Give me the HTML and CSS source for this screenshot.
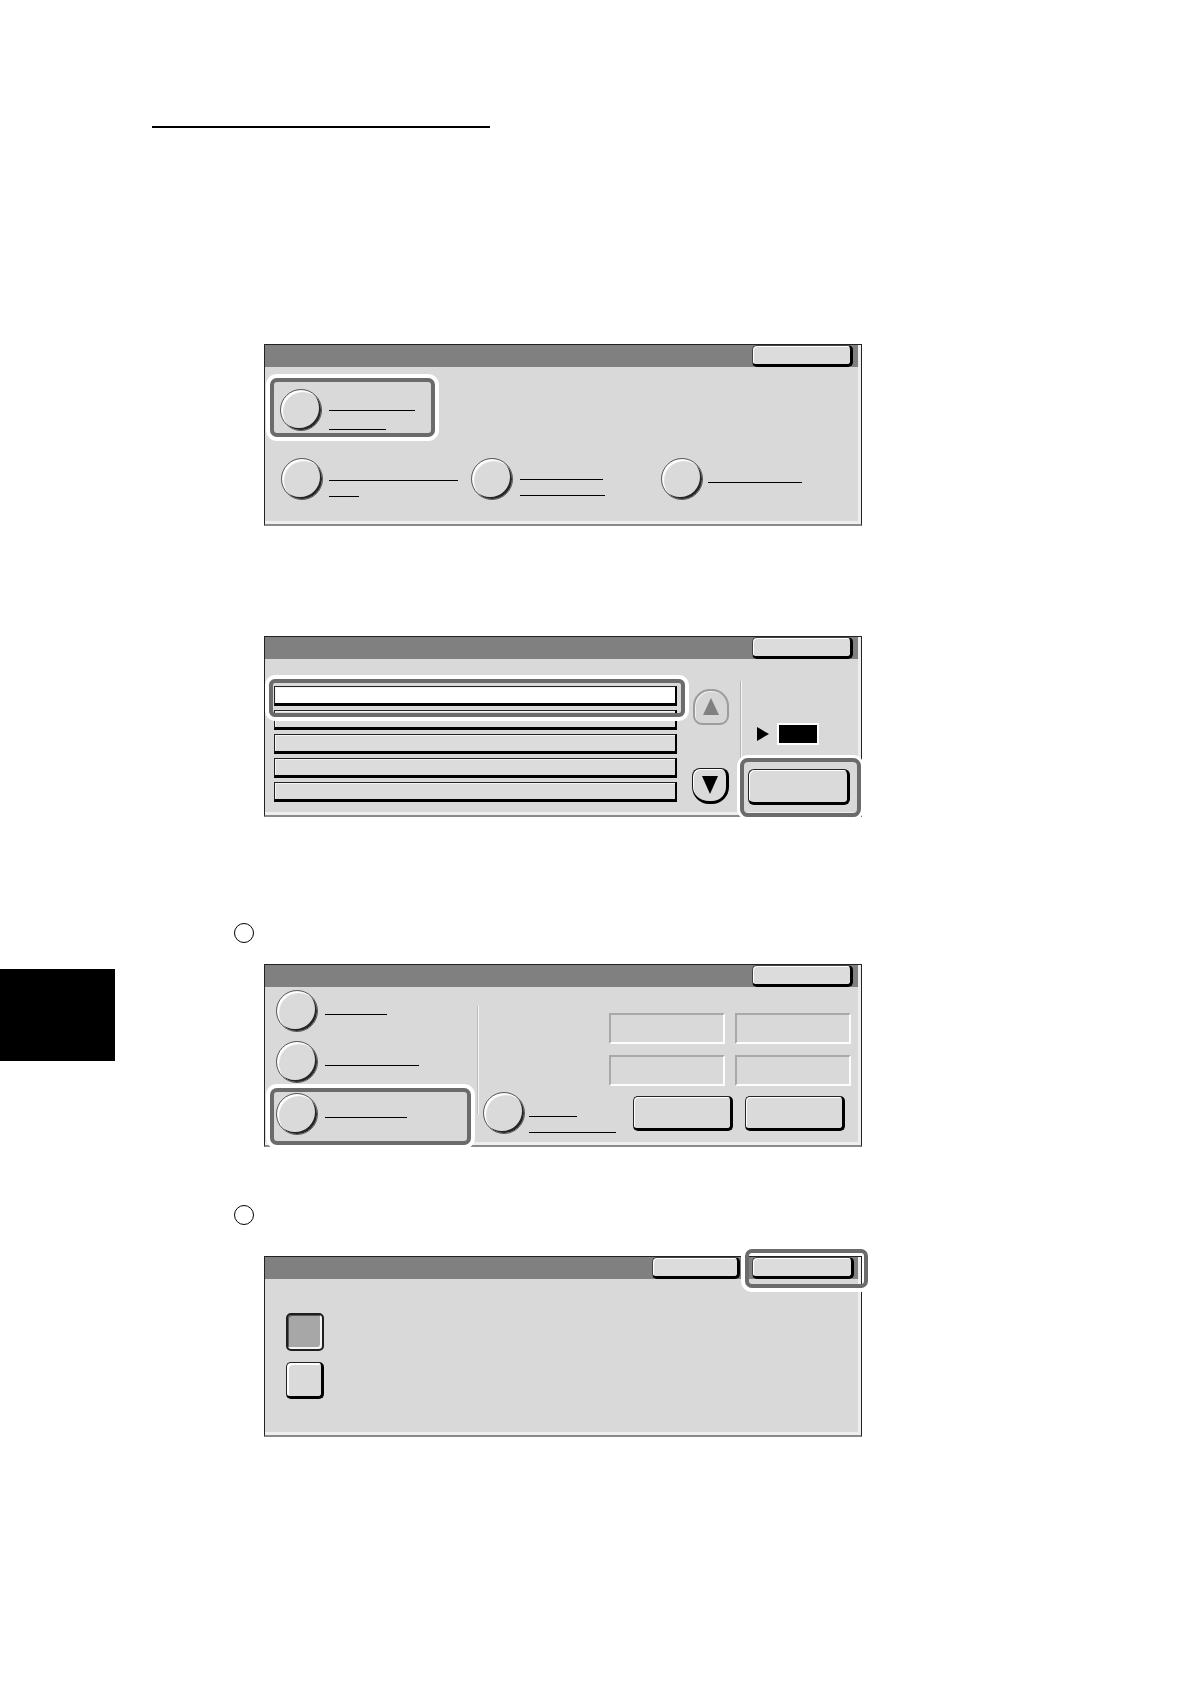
FILE: index.html
```html
<!DOCTYPE html>
<html>
<head>
<meta charset="utf-8">
<title>Screens</title>
<link rel="stylesheet" href="styles.css">
</head>
<body>
<div class="page">
  <div class="rule"></div>

  <div class="panel panel-a">
    <div class="bar"><div class="tbtn"></div></div>
    <div class="a-body">
      <div class="sel sel-a">
        <div class="circ"></div>
        <div class="lines"><div class="ln w86"></div><div class="ln w57"></div></div>
      </div>
      <div class="a-row">
        <div class="a-item a-i1">
          <div class="circ"></div>
          <div class="lines"><div class="ln w129"></div><div class="ln w30"></div></div>
        </div>
        <div class="a-item a-i2">
          <div class="circ"></div>
          <div class="lines"><div class="ln w83"></div><div class="ln w85"></div></div>
        </div>
        <div class="a-item a-i3">
          <div class="circ"></div>
          <div class="lines"><div class="ln w94"></div></div>
        </div>
      </div>
    </div>
  </div>

  <div class="panel panel-b">
    <div class="bar"><div class="tbtn"></div></div>
    <div class="b-body">
      <div class="list">
        <div class="row row-on"></div>
        <div class="row"></div>
        <div class="row"></div>
        <div class="row"></div>
        <div class="row"></div>
      </div>
      <div class="scroll">
        <div class="up"><div class="up-tri"></div></div>
        <div class="down"><div class="down-tri"></div></div>
      </div>
      <div class="b-right">
        <div class="b-info">
          <div class="b-ind"><div class="arrow"></div><div class="blk"></div></div>
        </div>
        <div class="sel sel-b"><div class="btn-l"></div></div>
      </div>
    </div>
  </div>

  <div class="marker m1"></div>

  <div class="sec-c">
    <div class="tab"></div>
    <div class="panel panel-c">
      <div class="bar"><div class="tbtn"></div></div>
      <div class="c-body">
        <div class="c-left">
          <div class="c-item c-i1">
            <div class="circ"></div>
            <div class="lines"><div class="ln w62"></div></div>
          </div>
          <div class="c-item c-i2">
            <div class="circ"></div>
            <div class="lines"><div class="ln w94"></div></div>
          </div>
          <div class="sel sel-c c-item">
            <div class="circ"></div>
            <div class="lines"><div class="ln w82"></div></div>
          </div>
        </div>
        <div class="c-sep"></div>
        <div class="c-right">
          <div class="grid">
            <div class="ebox"></div><div class="ebox"></div>
            <div class="ebox"></div><div class="ebox"></div>
          </div>
          <div class="c-bot">
            <div class="circ"></div>
            <div class="lines"><div class="ln w48"></div><div class="ln w87"></div></div>
            <div class="c-btns"><div class="btn-c"></div><div class="btn-c"></div></div>
          </div>
        </div>
      </div>
    </div>
  </div>

  <div class="marker m2"></div>

  <div class="panel panel-d">
    <div class="bar bar-d"><div class="tbtn tbtn-a"></div><div class="tbtn tbtn-b"></div></div>
    <div class="d-body">
      <div class="sq sq-on"></div>
      <div class="sq sq-off"></div>
    </div>
  </div>
</div>
</body>
</html>
```

FILE: styles.css
```css
* { box-sizing: border-box; }

body {
  margin: 0;
  background: #fff;
  font-family: "Liberation Sans", Arial, sans-serif;
}

.page {
  width: 1190px;
  padding-top: 126px;
  padding-bottom: 40px;
}

.rule {
  margin-left: 152px;
  width: 338px;
  height: 2px;
  background: #000;
}

/* ---------- panel frame ---------- */
.panel {
  position: relative;
  width: 598px;
  margin-left: 264px;
  background: #d9d9d9;
  border: 1px solid #222;
  border-bottom: 2px solid #8a8a8a;
  box-shadow: inset -3px -3px 0 #eeeeee;
}

.bar {
  height: 22px;
  margin-right: 3px;
  background: #808080;
  display: flex;
  justify-content: flex-end;
  padding-right: 5px;
}

.tbtn {
  width: 101px;
  height: 22px;
  background: #dcdcdc;
  border: 1px solid #444;
  border-right: 3px solid #000;
  border-bottom: 3px solid #000;
  border-radius: 5px;
  box-shadow: inset 1px 1px 0 #fff;
}

.circ {
  flex: none;
  width: 42px;
  height: 42px;
  border-radius: 50%;
  background: #dadada;
  border: 1px solid #5a5a5a;
  box-shadow: inset 2px 2px 1px #fff, inset -2px -2px 0 #262626;
}

.lines {
  display: flex;
  flex-direction: column;
}

.ln { height: 1px; background: #000; }
.w30 { width: 30px; }
.w48 { width: 48px; }
.w57 { width: 57px; }
.w62 { width: 62px; }
.w82 { width: 82px; }
.w83 { width: 83px; }
.w85 { width: 85px; }
.w86 { width: 86px; }
.w87 { width: 87px; }
.w94 { width: 94px; }
.w129 { width: 129px; }

.sel {
  border: 4px solid #6b6b6b;
  border-radius: 7px;
  box-shadow: 0 0 0 4px #fff;
}

/* ---------- panel A ---------- */
.panel-a { margin-top: 216px; height: 182px; }

.a-body { padding: 11px 0 0 5px; }

.sel-a {
  width: 165px;
  height: 59px;
  display: flex;
  align-items: flex-start;
  padding: 7px 0 0 6px;
}
.sel-a .lines { margin-left: 7px; padding-top: 21px; gap: 18px; }

.a-row { display: flex; margin: 21px 0 0 11px; }
.a-item { display: flex; align-items: flex-start; width: 190px; }
.a-i1 .lines { margin-left: 6px; padding-top: 22px; gap: 15px; }
.a-i2 .lines { margin-left: 7px; padding-top: 21px; gap: 15px; }
.a-i3 .lines { margin-left: 5px; padding-top: 24px; }

/* ---------- panel B ---------- */
.panel-b { margin-top: 110px; height: 181px; }

.b-body { display: flex; align-items: flex-start; }

.list {
  width: 403px;
  margin: 27px 0 0 9px;
  display: flex;
  flex-direction: column;
  gap: 4px;
}

.row {
  height: 20px;
  background: #dcdcdc;
  border: 1px solid #222;
  border-right: 2px solid #000;
  border-bottom: 3px solid #000;
  box-shadow: inset 1px 1px 0 #f4f4f4;
}

.row-on { position: relative; background: #fff; }
.row-on::after {
  content: "";
  position: absolute;
  left: -6px;
  top: -8px;
  right: -10px;
  bottom: -14px;
  border: 4px solid #6b6b6b;
  border-radius: 6px;
  box-shadow: 0 0 0 4px #fff;
}

.scroll {
  width: 37px;
  height: 115px;
  margin: 30px 0 0 15px;
  display: flex;
  flex-direction: column;
  justify-content: space-between;
  align-items: center;
}

.up {
  width: 36px;
  height: 36px;
  border: 2px solid #9c9c9c;
  border-radius: 17px 17px 9px 9px;
  background: #d6d6d6;
  box-shadow: inset 1px 1px 0 #f0f0f0;
  display: flex;
  align-items: center;
  justify-content: center;
}
.up-tri {
  width: 0;
  height: 0;
  border-left: 8px solid transparent;
  border-right: 8px solid transparent;
  border-bottom: 17px solid #808080;
  margin-top: -2px;
}

.down {
  width: 37px;
  height: 36px;
  border: 1px solid #1a1a1a;
  border-right: 3px solid #000;
  border-bottom: 3px solid #000;
  border-radius: 8px 8px 17px 17px;
  background: #dadada;
  box-shadow: inset 1px 1px 0 #fff;
  display: flex;
  align-items: center;
  justify-content: center;
}
.down-tri {
  width: 0;
  height: 0;
  border-left: 8px solid transparent;
  border-right: 8px solid transparent;
  border-top: 18px solid #000;
}

.b-right {
  width: 121px;
  margin-left: 11px;
  display: flex;
  flex-direction: column;
}

.b-info {
  margin-top: 22px;
  height: 77px;
  border-left: 1px solid #b4b4b4;
  box-shadow: inset 1px 0 0 #f4f4f4;
  padding: 42px 0 0 16px;
}
.b-ind { display: flex; align-items: center; }
.arrow {
  width: 0;
  height: 0;
  border-left: 12px solid #000;
  border-top: 7px solid transparent;
  border-bottom: 7px solid transparent;
}
.blk {
  width: 42px;
  height: 22px;
  margin-left: 8px;
  background: #000;
  border: 2px solid #fff;
}

.sel-b {
  width: 121px;
  height: 59px;
  border-radius: 8px;
  padding: 7px 0 0 4px;
  box-shadow: 0 0 0 3px #fff;
}

.btn-l {
  width: 102px;
  height: 36px;
  background: #dadada;
  border: 1px solid #222;
  border-right: 3px solid #000;
  border-bottom: 3px solid #000;
  border-radius: 6px;
  box-shadow: inset 1px 1px 0 #fff;
}

/* ---------- markers ---------- */
.marker {
  width: 20px;
  height: 20px;
  margin-left: 234px;
  border: 1px solid #000;
  border-radius: 50%;
}
.m1 { margin-top: 106px; }
.m2 { margin-top: 58px; }

/* ---------- panel C ---------- */
.sec-c { display: flex; align-items: flex-start; margin-top: 21px; }

.tab {
  flex: none;
  width: 115px;
  height: 92px;
  margin-top: 5px;
  background: #000;
}

.panel-c { flex: none; margin-left: 149px; height: 183px; }

.c-body { display: flex; align-items: flex-start; }

.c-left {
  width: 212px;
  display: flex;
  flex-direction: column;
  align-items: flex-start;
}

.c-item { display: flex; align-items: flex-start; }
.c-item .lines { margin-left: 7px; padding-top: 24px; }
.c-i1 { margin: 3px 0 0 11px; }
.c-i2 { margin: 9px 0 0 11px; }
.sel-c {
  width: 201px;
  height: 57px;
  margin: 5px 0 0 5px;
  padding: 1px 0 0 2px;
}

.c-sep {
  width: 2px;
  height: 108px;
  margin-top: 19px;
  background: #f6f6f6;
  border-left: 1px solid #bcbcbc;
}

.c-right { display: flex; flex-direction: column; }

.grid {
  display: grid;
  grid-template-columns: 116px 116px;
  column-gap: 10px;
  row-gap: 11px;
  margin: 26px 0 0 130px;
}

.ebox {
  height: 31px;
  border: 2px solid;
  border-color: #a9a9a9 #fdfdfd #fdfdfd #a9a9a9;
}

.c-bot { display: flex; align-items: flex-start; margin: 6px 0 0 4px; }
.c-bot .lines { margin-left: 4px; padding-top: 24px; gap: 15px; }

.c-btns { display: flex; gap: 12px; margin: 4px 0 0 17px; }
.btn-c {
  width: 100px;
  height: 35px;
  background: #dadada;
  border: 1px solid #222;
  border-right: 3px solid #000;
  border-bottom: 3px solid #000;
  border-radius: 5px;
  box-shadow: inset 1px 1px 0 #fff;
}

/* ---------- panel D ---------- */
.panel-d { margin-top: 31px; height: 181px; }

.bar-d { gap: 12px; padding-right: 4px; }
.tbtn-a { width: 88px; }
.tbtn-b { width: 102px; position: relative; }
.tbtn-b::after {
  content: "";
  position: absolute;
  left: -8px;
  top: -9px;
  right: -17px;
  bottom: -12px;
  border: 4px solid #6b6b6b;
  border-radius: 7px;
  box-shadow: 0 0 0 4px #fff;
}

.d-body {
  padding: 34px 0 0 21px;
  display: flex;
  flex-direction: column;
  gap: 11px;
}

.sq { width: 38px; height: 38px; border-radius: 5px; }
.sq-on {
  background: #a7a7a7;
  border: 2px solid #1e1e1e;
  box-shadow: inset -2px -2px 0 #f4f4f4, inset 1px 1px 0 #555;
}
.sq-off {
  height: 37px;
  background: #dadada;
  border: 1px solid #222;
  border-right: 3px solid #000;
  border-bottom: 3px solid #000;
  box-shadow: inset 2px 2px 0 #fff;
}
```
